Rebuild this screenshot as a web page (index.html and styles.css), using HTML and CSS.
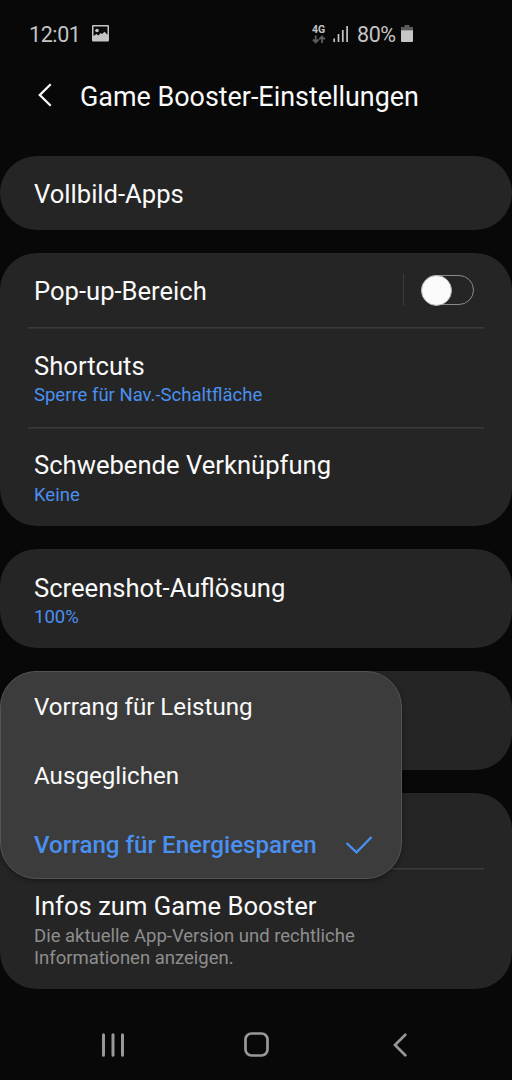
FILE: index.html
```
<!DOCTYPE html>
<html lang="de">

<head>
    <title>Game Booster-Einstellungen</title>
    <meta charset="utf-8">
    <meta name="viewport" content="width=device-width, initial-scale=1.0">
    <link rel="stylesheet" href="styles.css">
</head>

<body>

    <div class="statusbar">
        <span class="klokke">12:01</span>
        <svg class="billede" width="17" height="17" viewBox="0 0 17 17">
            <path fill="#c4c4c4" fill-rule="evenodd" d="M1 0H16Q17 0 17 1V15Q17 16.500 16 16.500H1Q0 16.500 0 15V1Q0 0 1 0ZM1.500 1.500V11L4.500 9L6.500 10.500L8.500 8L10 9L12.500 6.800L15.500 9.800V1.500Z" />
            <circle cx="5" cy="5.500" r="1.800" fill="#c4c4c4" />
        </svg>
        <div class="netz">
            <span>4G</span>
            <svg width="14" height="9" viewBox="0 0 14 9">
                <path fill="none" stroke="#5c5c5c" stroke-width="1.900" d="M3.700 .5V7M.9 4.500L3.700 7.300L6.500 4.500M10 8V2M7.200 4.300L10 1.500L12.800 4.300" />
            </svg>
        </div>
        <svg class="signal" width="16" height="16" viewBox="0 0 16 16">
            <path stroke="#c4c4c4" stroke-width="1.700" d="M1.200 12.500V16M5.500 8V16M9.800 4V16M14.100 0V16" />
        </svg>
        <span class="prozent">80%</span>
        <svg class="akku" width="12" height="17" viewBox="0 0 12 17">
            <path fill="#5a5a5a" d="M3.500 0H8.500V2H12V5.500H0V2H3.500Z" />
            <path fill="#c6c6c6" d="M0 5.300H12V16Q12 17 11 17H1Q0 17 0 16Z" />
        </svg>
    </div>

    <header>
        <svg width="14" height="24" viewBox="0 0 14 24">
            <path fill="none" stroke="#fafafa" stroke-width="2.300" d="M12.700 1.200L1.800 12L12.700 22.800" />
        </svg>
        <h1>Game Booster-Einstellungen</h1>
    </header>

    <main>
        <section class="card">
            <article class="row">
                <h2>Vollbild-Apps</h2>
            </article>
        </section>

        <section class="card">
            <article class="row popup-row">
                <h2>Pop-up-Bereich</h2>
                <div class="switch"><span class="knob"></span></div>
            </article>
            <article class="row">
                <h2>Shortcuts</h2>
                <p>Sperre für Nav.-Schaltfläche</p>
            </article>
            <article class="row">
                <h2>Schwebende Verknüpfung</h2>
                <p>Keine</p>
            </article>
        </section>

        <section class="card">
            <article class="row screenshot">
                <h2>Screenshot-Auflösung</h2>
                <p>100%</p>
            </article>
        </section>

        <section class="card modus">
            <ul class="menu">
                <li>Vorrang für Leistung</li>
                <li>Ausgeglichen</li>
                <li class="valgt">Vorrang für Energiesparen
                    <svg width="28" height="20" viewBox="0 0 28 20">
                        <path fill="none" stroke="#4a90f0" stroke-width="2.300" d="M1.500 8L11.500 17.300L26.500 2" />
                    </svg>
                </li>
            </ul>
        </section>

        <section class="card">
            <article class="row tom"></article>
            <article class="row info">
                <h2>Infos zum Game Booster</h2>
                <p class="graa">Die aktuelle App-Version und rechtliche Informationen anzeigen.</p>
            </article>
        </section>
    </main>

    <nav>
        <svg width="24" height="24" viewBox="0 0 24 24">
            <path stroke="#989898" stroke-width="3" stroke-linecap="round" d="M2.500 1.800V22.200M12 1.800V22.200M21.500 1.800V22.200" />
        </svg>
        <svg class="home" width="25" height="25" viewBox="0 0 25 25">
            <rect x="1.500" y="1.500" width="22" height="22" rx="6" fill="none" stroke="#989898" stroke-width="2.700" />
        </svg>
        <svg width="14" height="24" viewBox="0 0 14 24">
            <path fill="none" stroke="#989898" stroke-width="2.700" stroke-linecap="round" d="M12.300 1.800L2 12L12.300 22.200" />
        </svg>
    </nav>

</body>

</html>
```

FILE: styles.css
```
*,
*::before {
    box-sizing: border-box;
}

body {
    margin: 0;
    width: 512px;
    height: 1080px;
    overflow: hidden;
    display: flex;
    flex-direction: column;
    background: #080808;
    color: #fafafa;
    font-family: Roboto, sans-serif;
}

h1,
h2,
p,
ul {
    margin: 0;
    padding: 0;
    font-weight: 400;
}

svg {
    display: block;
    flex: none;
}

.statusbar {
    height: 68px;
    padding-left: 29px;
    display: flex;
    align-items: center;
    color: #c4c4c4;
    font-size: 21.500px;
    letter-spacing: -0.4px;
}

.klokke {
    width: 63px;
}

.billede {
    margin-bottom: 2px;
}

.netz {
    width: 14px;
    margin-left: 203px;
    font-size: 10.500px;
    font-weight: 700;
    line-height: 10px;
    letter-spacing: 0;
}

.signal {
    margin-left: 7px;
}

.prozent {
    width: 44px;
    margin-left: 8px;
}

.akku {
    margin-bottom: 1px;
}

header {
    height: 88px;
    padding: 14px 0 0 38px;
    display: flex;
    gap: 28px;
}

header svg {
    margin-top: 1px;
}

h1 {
    font-size: 26.900px;
    line-height: 30px;
}

main {
    height: 844px;
    display: flex;
    flex-direction: column;
    gap: 23px;
}

.card {
    flex: none;
    background: #252525;
    border-radius: 37px;
}

.row {
    padding: 23px 34px 21px;
    background: linear-gradient(#3b3b3b, #3b3b3b) no-repeat 28px 0 / 456px 0;
}

.row + .row {
    background-size: 456px 1.500px;
}

h2 {
    font-size: 25.600px;
    line-height: 30px;
}

.row p {
    margin-top: 3px;
    color: #4a90f0;
    font-size: 18.500px;
    line-height: 22px;
}

.popup-row {
    display: flex;
    justify-content: space-between;
}

.popup-row + .row {
    padding-top: 24px;
}

.row:last-child:not(:first-child) {
    padding-bottom: 20px;
}

.row:last-child:not(:first-child) p {
    margin-top: 4px;
}

.switch {
    width: 71px;
    height: 32px;
    margin: -2px 4px 0 0;
    padding-left: 17px;
    border-left: 1px solid #3b3b3b;
    display: flex;
    align-items: center;
}

.switch::before {
    content: "";
    width: 53px;
    height: 30px;
    flex: none;
    border: 1.500px solid #8a8a8a;
    border-radius: 15px;
}

.knob {
    width: 31px;
    height: 31px;
    flex: none;
    margin-left: -53px;
    border-radius: 50%;
    background: #fafafa;
    border: 1px solid #b0b0b0;
}

.screenshot {
    padding-top: 24px;
    padding-bottom: 20px;
}

.modus {
    height: 99px;
    position: relative;
}

.menu {
    position: absolute;
    top: 0;
    left: 0;
    width: 402px;
    height: 208px;
    list-style: none;
    background: #3c3c3c;
    border: 1px solid #545454;
    border-radius: 36px;
    box-shadow: 0 2px 5px rgba(0, 0, 0, 0.35);
}

.menu li {
    height: 69px;
    padding: 0 28px 0 33px;
    display: flex;
    justify-content: space-between;
    align-items: center;
    font-size: 24.150px;
}

.menu .valgt {
    color: #4a90f0;
    font-weight: 500;
}

.tom {
    height: 75px;
}

.row .graa {
    width: 350px;
    color: #8e8e8e;
}

nav {
    padding: 32px 105px 0 101px;
    display: flex;
    justify-content: space-between;
    align-items: center;
}

.home {
    margin-right: 6px;
}
```
